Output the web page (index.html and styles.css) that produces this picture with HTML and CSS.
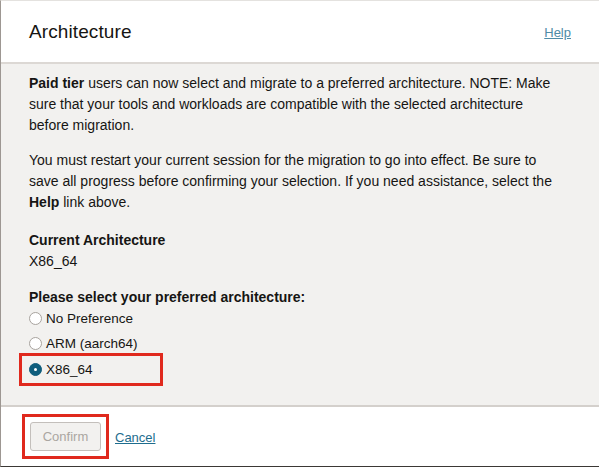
FILE: index.html
```html
<!DOCTYPE html>
<html>
<head>
<meta charset="utf-8">
<link rel="stylesheet" href="styles.css">
</head>
<body>
<div class="dialog">
  <header class="head">
    <h1 class="title">Architecture</h1>
    <a class="link help" href="#">Help</a>
  </header>
  <main class="content">
    <p class="para"><b>Paid tier</b> users can now select and migrate to a preferred architecture. NOTE: Make sure that your tools and workloads are compatible with the selected architecture before migration.</p>
    <p class="para last">You must restart your current session for the migration to go into effect. Be sure to save all progress before confirming your selection. If you need assistance, select the <b>Help</b> link above.</p>
    <div class="field">
      <div class="label">Current Architecture</div>
      <div class="value">X86_64</div>
    </div>
    <div class="field">
      <div class="label">Please select your preferred architecture:</div>
      <div class="options">
        <label class="opt"><span class="radio"></span>No Preference</label>
        <label class="opt"><span class="radio"></span>ARM (aarch64)</label>
        <label class="opt sel-box"><span class="radio on"></span>X86_64</label>
      </div>
    </div>
  </main>
  <footer class="foot">
    <div class="hl"><button class="btn" disabled>Confirm</button></div>
    <a class="link cancel" href="#">Cancel</a>
  </footer>
</div>
</body>
</html>
```

FILE: styles.css
```css
* { box-sizing: border-box; }
html, body { margin: 0; padding: 0; }
body {
  width: 599px;
  height: 467px;
  font-family: "Liberation Sans", Arial, sans-serif;
  color: #161513;
  background: #fff;
  overflow: hidden;
}
.dialog {
  height: 467px;
  display: flex;
  flex-direction: column;
  border-left: 1px solid #9d9792;
  border-top: 1px solid #e4e2df;
  border-bottom: 1px solid #3b3835;
}
.head {
  height: 63px;
  flex: none;
  display: flex;
  align-items: center;
  justify-content: space-between;
  padding: 0 28px 0 28px;
  background: #fff;
  border-bottom: 2px solid #dcd8d4;
}
.title {
  margin: 0;
  font-size: 19px;
  font-weight: normal;
  letter-spacing: 0.1px;
  color: #161513;
}
.link {
  color: #1e6d8e;
  text-decoration: underline;
  font-size: 13px;
}
.help {
  color: #4f8ba6;
  margin-top: 2px;
}
.content {
  flex: 1;
  background: #f2f1ef;
  padding: 9px 34px 0 28px;
  font-size: 14px;
  line-height: 21px;
  border-bottom: 2px solid #d4d0cc;
}
.para { margin: 0 0 14px 0; }
.para.last { margin-bottom: 17px; }
.field { margin-bottom: 15px; }
.label { font-weight: bold; }
.options {
  display: flex;
  flex-direction: column;
  margin-top: -2px;
}
.opt {
  display: flex;
  align-items: center;
  gap: 4px;
  height: 25px;
  font-size: 13.5px;
}
.radio {
  width: 13px;
  height: 13px;
  border-radius: 50%;
  border: 1px solid #a8a39e;
  background: #fff;
  flex: none;
}
.radio.on {
  background: #0f5d7c;
  border-color: #0f5d7c;
  position: relative;
}
.radio.on::after {
  content: "";
  position: absolute;
  left: 4px; top: 4px;
  width: 3px; height: 3px;
  border-radius: 50%;
  background: #fff;
}
.sel-box {
  margin-left: -10px;
  margin-top: -3px;
  width: 144px;
  height: 33px;
  border: 3px solid #e0291d;
  padding-left: 7px;
}
.foot {
  height: 59px;
  flex: none;
  display: flex;
  align-items: center;
  gap: 6px;
  padding-left: 21px;
  background: #fff;
}
.hl {
  border: 3px solid #e0291d;
  padding: 5px;
  display: flex;
}
.btn {
  width: 71px;
  height: 29px;
  font-family: "Liberation Sans", Arial, sans-serif;
  font-size: 13px;
  color: #aaa6a1;
  background: #f2f1ef;
  border: 1px solid #c3bfbb;
  border-radius: 3px;
}
.cancel { margin-top: 1px; }
```
